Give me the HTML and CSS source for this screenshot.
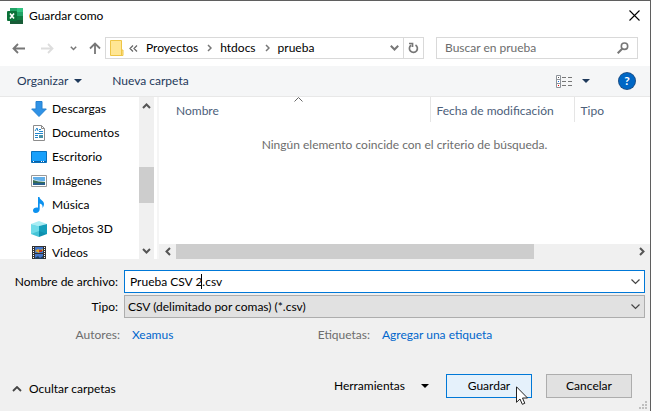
FILE: index.html
```html
<!DOCTYPE html>
<html lang="es">
<head>
  <meta charset="UTF-8">
  <meta name="viewport" content="width=device-width, initial-scale=1.0">
  <title>Guardar como</title>
  <link rel="stylesheet" href="styles.css">
</head>
<body>
  <div class="dialog">
    <header class="titlebar">
      <svg class="app-icon" width="16" height="16" viewBox="0 0 16 16">
        <path fill="#21a366" d="M3 0h7v4H3z"/>
        <path fill="#33c481" d="M10 0h6v4h-6z"/>
        <path fill="#107c41" d="M3 4h7v4H3zM10 8h6v4h-6z"/>
        <path fill="#21a366" d="M10 4h6v4h-6z"/>
        <path fill="#185c37" d="M3 8h7v4h6v4H3z"/>
        <rect y="3" width="10" height="10" rx="1" fill="#0b7239"/>
        <path d="M3 5.500l4 5M7 5.500l-4 5" stroke="#fff" stroke-width="1.600"/>
      </svg>
      <h1 class="title">Guardar como</h1>
      <button class="icon-btn close" aria-label="Cerrar">
        <svg width="11" height="11" viewBox="0 0 11 11"><path d="M.5.5l10 10M10.500.5l-10 10" fill="none" stroke="#000" stroke-width="1.100"/></svg>
      </button>
    </header>

    <nav class="navbar">
      <div class="nav-buttons">
        <button class="icon-btn" aria-label="Atrás">
          <svg width="13" height="11" viewBox="0 0 13 11"><path d="M13 5.500H1.500M6 1L1.500 5.500 6 10" fill="none" stroke="#777" stroke-width="1.800"/></svg>
        </button>
        <button class="icon-btn" aria-label="Adelante" disabled>
          <svg width="13" height="11" viewBox="0 0 13 11"><path d="M0 5.500h11.500M7 1l4.500 4.500L7 10" fill="none" stroke="#ddd" stroke-width="1.800"/></svg>
        </button>
        <button class="icon-btn" aria-label="Ubicaciones recientes">
          <svg width="7" height="5" viewBox="0 0 7 5"><path d="M.8.8l2.700 2.700L6.200.8" fill="none" stroke="#777" stroke-width="1.500"/></svg>
        </button>
        <button class="icon-btn" aria-label="Subir">
          <svg width="12" height="12" viewBox="0 0 12 12"><path d="M6 12V1.500M1 6.500l5-5 5 5" fill="none" stroke="#777" stroke-width="1.800"/></svg>
        </button>
      </div>
      <div class="address">
        <svg class="folder" width="14" height="16" viewBox="0 0 14 16">
          <path d="M.5.5h11v9.500h1.500v5.500H.5z" fill="#ffe694" stroke="#eec546"/>
          <path d="M11.500 10v5.500" stroke="#eec546"/>
        </svg>
        <svg class="crumb-sep" width="9" height="7" viewBox="0 0 9 7"><path d="M4 .5l-3 3 3 3M8 .5l-3 3 3 3" fill="none" stroke="#666" stroke-width="1.200"/></svg>
        <a class="crumb" href="#">Proyectos</a>
        <svg class="crumb-sep" width="5" height="8" viewBox="0 0 5 8"><path d="M1 1l3 3-3 3" fill="none" stroke="#777" stroke-width="1.500"/></svg>
        <a class="crumb" href="#">htdocs</a>
        <svg class="crumb-sep" width="5" height="8" viewBox="0 0 5 8"><path d="M1 1l3 3-3 3" fill="none" stroke="#777" stroke-width="1.500"/></svg>
        <a class="crumb" href="#">prueba</a>
        <button class="icon-btn address-drop" aria-label="Ubicaciones anteriores">
          <svg width="9" height="6" viewBox="0 0 9 6"><path d="M.8.8l3.700 3.700L8.200.8" fill="none" stroke="#777" stroke-width="2"/></svg>
        </button>
        <button class="icon-btn refresh" aria-label="Actualizar">
          <svg width="11" height="12" viewBox="0 0 11 12"><path d="M7.500 3a4 4 0 1 1-4.500.2M1 1.500h3.500V5" fill="none" stroke="#777" stroke-width="1.700"/></svg>
        </button>
      </div>
      <div class="search">
        <input type="text" placeholder="Buscar en prueba" aria-label="Buscar en prueba">
        <svg width="12" height="12" viewBox="0 0 12 12"><circle cx="7.500" cy="4.200" r="3.200" fill="none" stroke="#777" stroke-width="1.600"/><path d="M5.200 6.700L.7 11.200" stroke="#777" stroke-width="2"/></svg>
      </div>
    </nav>

    <div class="toolbar">
      <button class="tool">Organizar <span class="arrow"></span></button>
      <button class="tool">Nueva carpeta</button>
      <button class="tool view" aria-label="Cambiar vista">
        <svg width="17" height="13" viewBox="0 0 17 13">
          <path d="M.5.5h4v12h-4zM.5 4.500h4M.5 8.500h4" fill="#fff" stroke="#8d9299"/>
          <path d="M6 2.500h4M12 2.500h4M6 6.500h4M12 6.500h4M6 10.500h4M12 10.500h4" stroke="#777"/>
          <path d="M2 2h1v1H2z" fill="#555"/><path d="M2 6h1v1H2z" fill="#1672e8"/><path d="M2 10h1v1H2z" fill="#e00"/>
        </svg>
        <span class="arrow"></span>
      </button>
      <button class="help" aria-label="Ayuda">?</button>
    </div>

    <main class="explorer">
      <ul class="places">
        <li><a href="#">
          <svg width="16" height="16" viewBox="0 0 16 16"><path d="M5 .5h6v7.500h4.300L8 15.500.7 8H5z" fill="#2f92e6" stroke="#2581d0"/></svg>
          Descargas</a></li>
        <li><a href="#">
          <svg width="16" height="16" viewBox="0 0 16 16">
            <path d="M2.500.5h8l3 3v12h-11z" fill="#fff" stroke="#8c8c8c"/><path d="M10.500.5v3h3" fill="none" stroke="#8c8c8c"/>
            <path d="M4 6l2-3 1 3M8 4.500h2M8 6.500h4M4 8.500h8M4 10.500h3M4 12.500h3" fill="none" stroke="#2386cb"/><path d="M8 10h4v3H8z" fill="#4a91a6"/>
          </svg>
          Documentos</a></li>
        <li><a href="#">
          <svg width="16" height="16" viewBox="0 0 16 16"><path d="M.5 2.500h15v11H.5z" fill="#18a0fb" stroke="#0871bd"/><path d="M1 12.500h14" stroke="#0a5fa3"/><path d="M2 12.500h1M10 12.500h1M12 12.500h1" stroke="#fff"/></svg>
          Escritorio</a></li>
        <li><a href="#">
          <svg width="16" height="16" viewBox="0 0 16 16"><path d="M.5 2.500h15v11H.5z" fill="#fff" stroke="#999"/><path d="M2 4h12v8H2z" fill="#62afe9"/><path d="M2 6q4 2 12 2v1H2z" fill="#dceffa"/><path d="M2 7q5 2 12 2v1H2z" fill="#386d54"/><path d="M2 10h12v2H2z" fill="#285f8d"/></svg>
          Imágenes</a></li>
        <li><a href="#">
          <svg width="16" height="16" viewBox="0 0 16 16"><path d="M7 0h1.500c0 3 4.500 3.500 4.500 7 0 2-1 3.200-1.500 4 .5-3-1-4.200-2.800-4.500V12c0 2.500-2 4-4 4S2 14.800 2 13.300C2 11.500 4.500 10 7 10.700z" fill="#0c91ef"/></svg>
          Música</a></li>
        <li><a href="#">
          <svg width="16" height="16" viewBox="0 0 16 16"><path d="M0 3l8-3 8 3-8 2z" fill="#a8edf4"/><path d="M0 3l8 2v8l-8 0z" fill="#6fdbe8"/><path d="M16 3L8 5v8h8z" fill="#139ebb"/><path d="M0 13l8-3v6z" fill="#45c3d6"/><path d="M16 13l-8-3v6z" fill="#0f8fae"/></svg>
          Objetos 3D</a></li>
        <li><a href="#">
          <svg width="16" height="16" viewBox="0 0 16 16"><path d="M1 1h14v15H1z" fill="#333"/><path d="M4 2h8v6H4zM4 9h8v7H4z" fill="#4577ca"/><path d="M4 6l3-2 2 1 3-1v2H9l-1 2z" fill="#dea62e"/><path d="M8 5h3v2H8z" fill="#c4371d"/><path d="M4 13l3-2 2 2 3-2v5H4z" fill="#23405c"/><path d="M2.500 2v14M13.500 2v14" stroke="#fff" stroke-dasharray="1 1"/></svg>
          Videos</a></li>
      </ul>
      <div class="scroll-v">
        <svg width="9" height="6" viewBox="0 0 9 6"><path d="M1 5l3.500-3.500L8 5" fill="none" stroke="#555" stroke-width="2"/></svg>
        <div class="track-v"><div class="thumb-v"></div></div>
        <svg width="9" height="6" viewBox="0 0 9 6"><path d="M1 1l3.500 3.500L8 1" fill="none" stroke="#555" stroke-width="2"/></svg>
      </div>
      <section class="files">
        <table class="file-table">
          <thead>
            <tr>
              <th class="col-name">Nombre
                <svg class="sort" width="9" height="5" viewBox="0 0 9 5"><path d="M.5 4.500l4-4 4 4" fill="none" stroke="#666"/></svg>
              </th>
              <th class="col-date">Fecha de modificación</th>
              <th class="col-type">Tipo</th>
            </tr>
          </thead>
        </table>
        <p class="empty">Ningún elemento coincide con el criterio de búsqueda.</p>
        <div class="scroll-h">
          <svg width="6" height="9" viewBox="0 0 6 9"><path d="M5 1L1.500 4.500 5 8" fill="none" stroke="#555" stroke-width="2"/></svg>
          <div class="track-h"><div class="thumb-h"></div></div>
          <svg width="6" height="9" viewBox="0 0 6 9"><path d="M1 1l3.500 3.500L1 8" fill="none" stroke="#555" stroke-width="2"/></svg>
        </div>
      </section>
    </main>

    <form class="form">
      <div class="fields">
        <label for="filename">Nombre de archivo:</label>
        <div class="combo combo-active">
          <input id="filename" type="text" value="Prueba CSV 2.csv">
          <span class="caret"></span>
          <svg width="9" height="6" viewBox="0 0 9 6"><path d="M.5.5l4 4 4-4" fill="none" stroke="#444" stroke-width="1.200"/></svg>
        </div>
        <label for="filetype">Tipo:</label>
        <div class="combo">
          <select id="filetype"><option>CSV (delimitado por comas) (*.csv)</option></select>
          <svg width="9" height="6" viewBox="0 0 9 6"><path d="M.5.5l4 4 4-4" fill="none" stroke="#444" stroke-width="1.200"/></svg>
        </div>
      </div>
      <div class="meta">
        <span class="meta-label">Autores:</span>
        <a href="#">Xeamus</a>
        <span class="meta-label">Etiquetas:</span>
        <a href="#">Agregar una etiqueta</a>
      </div>
      <div class="actions">
        <button type="button" class="plain hide-folders">
          <svg width="10" height="6" viewBox="0 0 10 6"><path d="M1 5l4-4 4 4" fill="none" stroke="#444" stroke-width="1.800"/></svg>
          Ocultar carpetas
        </button>
        <button type="button" class="plain tools">Herramientas <span class="arrow"></span></button>
        <button type="button" class="btn btn-primary">Guardar
          <svg class="pointer" width="12" height="19" viewBox="0 0 12 19"><path d="M.5.8v15.500l3.500-3.300 2.300 5.300 2.500-1L6.500 12h5z" fill="#fff" stroke="#222"/></svg>
        </button>
        <button type="button" class="btn">Cancelar</button>
      </div>
      <svg class="grip" width="8" height="8" viewBox="0 0 8 8"><path d="M6 0h2v2H6zM3 3h2v2H3zM6 3h2v2H6zM0 6h2v2H0zM3 6h2v2H3zM6 6h2v2H6z" fill="#bfbfbf"/></svg>
    </form>
  </div>
</body>
</html>
```
FILE: styles.css
```css
* {
  box-sizing: border-box;
  margin: 0;
  padding: 0;
}

:root {
  --text: #000;
  --navy: #1e395b;
  --header: #4c607a;
  --muted: #6d6d6d;
  --link: #0066cc;
  --accent: #0078d7;
  --line: #d9d9d9;
  --face: #f0f0f0;
  --button: #e1e1e1;
  --thumb: #cdcdcd;
}

body,
button,
input,
select {
  font-family: Lato, "Segoe UI", sans-serif;
  font-size: 12px;
  line-height: 16px;
  color: var(--text);
}

button {
  background: none;
  border: none;
}

a {
  color: inherit;
  text-decoration: none;
}

svg {
  display: block;
  flex: none;
}

.dialog {
  display: flex;
  flex-direction: column;
  height: 100vh;
  background: #fff;
  border-top: 1px solid #5f5f5f;
  border-right: 1px solid #5f5f5f;
}

.icon-btn {
  display: flex;
  align-items: center;
  justify-content: center;
}

.arrow {
  border: 4px solid transparent;
  border-top-color: currentColor;
  border-bottom: none;
}

/* Title bar */
.titlebar {
  display: flex;
  align-items: center;
  height: 29px;
  padding: 0 10px 0 7px;
}

.title {
  flex: 1;
  margin-left: 6px;
  font-size: 12px;
  font-weight: 400;
}

/* Navigation */
.navbar {
  display: flex;
  padding: 7px 12px 7px;
}

.nav-buttons {
  display: flex;
  align-items: center;
  gap: 16px;
  width: 93px;
}

.nav-buttons .icon-btn:last-child {
  margin-left: -4px;
}

.address {
  display: flex;
  flex: 1;
  align-items: center;
  height: 22px;
  border: 1px solid var(--line);
  padding-left: 4px;
}

.folder {
  margin-right: 5px;
}

.crumb {
  margin: 0 9px 0 8px;
}

.address-drop {
  margin-left: auto;
  width: 18px;
}

.refresh {
  align-self: stretch;
  width: 20px;
  border-left: 1px solid var(--line);
}

.search {
  display: flex;
  flex: 0 0 202px;
  align-items: center;
  height: 22px;
  margin-left: 12px;
  padding: 0 8px;
  border: 1px solid var(--line);
}

.search input {
  flex: 1;
  min-width: 0;
  border: none;
  outline: none;
}

.search input::placeholder {
  color: var(--muted);
}

/* Toolbar */
.toolbar {
  display: flex;
  align-items: center;
  height: 31px;
  padding: 0 15px 0 17px;
  background: #f5f6f7;
  border-bottom: 1px solid #e8e8e8;
}

.tool {
  display: flex;
  align-items: center;
  gap: 6px;
  margin-right: 30px;
  color: var(--navy);
}

.view {
  gap: 9px;
  margin: 0 29px 0 auto;
}

.help {
  width: 16px;
  height: 16px;
  border-radius: 50%;
  background: #0067c5;
  box-shadow: 0 0 0 1px #1b4e86;
  color: #fff;
  font-weight: 700;
}

/* Explorer */
.explorer {
  display: flex;
  flex: 1;
  min-height: 0;
}

.places {
  width: 139px;
  padding-left: 31px;
  overflow: hidden;
  list-style: none;
}

.places a {
  display: flex;
  align-items: center;
  gap: 5px;
  height: 24px;
}

.scroll-v {
  display: flex;
  flex-direction: column;
  align-items: center;
  width: 15px;
  padding: 6px 0 5px;
  background: var(--face);
}

.track-v {
  display: grid;
  grid-template-rows: 58fr 36fr 45fr;
  flex: 1;
  width: 100%;
}

.thumb-v {
  grid-row: 2;
  background: var(--thumb);
}

.files {
  display: flex;
  flex: 1;
  flex-direction: column;
  min-width: 0;
  margin-left: 3px;
  border-left: 2px solid #f5f5f5;
}

.file-table {
  width: 100%;
  border-collapse: collapse;
  table-layout: fixed;
}

.file-table th {
  position: relative;
  height: 25px;
  padding: 2px 0 0 6px;
  border-right: 1px solid #e5e5e5;
  color: var(--header);
  font-weight: 400;
  text-align: left;
}

.file-table .col-name {
  width: 271px;
  padding-left: 17px;
}

.col-date {
  width: 144px;
}

.file-table .col-type {
  border-right: none;
}

.sort {
  position: absolute;
  top: 0;
  left: 50%;
}

.empty {
  margin-top: 15px;
  color: var(--muted);
  text-align: center;
}

.scroll-h {
  display: flex;
  align-items: center;
  height: 15px;
  margin-top: auto;
  padding: 0 5px 0 6px;
  background: var(--face);
}

.track-h {
  display: grid;
  grid-template-columns: 358fr 100fr;
  flex: 1;
  height: 100%;
  margin: 0 5px;
}

.thumb-h {
  background: var(--thumb);
}

/* Form */
.form {
  position: relative;
  padding: 11px 5px 13px 12px;
  background: var(--face);
}

.fields {
  display: grid;
  grid-template-columns: 106px 1fr;
  align-items: center;
  gap: 2px 6px;
}

.fields label {
  text-align: right;
  white-space: nowrap;
}

.combo {
  position: relative;
  display: flex;
  align-items: center;
  height: 23px;
  background: var(--button);
  border: 1px solid #adadad;
}

.combo-active {
  background: #fff;
  border-color: var(--accent);
}

.combo input,
.combo select {
  width: 100%;
  height: 100%;
  padding: 0 24px 0 3px;
  border: none;
  outline: none;
  background: none;
  appearance: none;
}

.combo input {
  padding-left: 5px;
}

.combo svg {
  position: absolute;
  right: 4px;
  pointer-events: none;
}

.caret {
  position: absolute;
  left: 76px;
  width: 1px;
  height: 15px;
  background: #000;
}

.meta {
  display: grid;
  grid-template-columns: 108px 1fr 80px 263px;
  gap: 12px;
  margin-top: 9px;
  color: var(--link);
}

.meta-label {
  color: var(--muted);
  text-align: right;
}

.actions {
  display: flex;
  align-items: center;
  gap: 14px;
  margin-top: 31px;
  padding-right: 13px;
}

.plain {
  display: flex;
  align-items: center;
}

.hide-folders {
  gap: 7px;
  margin-right: auto;
  padding-top: 6px;
}

.tools {
  gap: 16px;
  margin-right: 3px;
}

.btn {
  position: relative;
  width: 86px;
  height: 24px;
  background: var(--button);
  border: 1px solid #adadad;
}

.btn-primary {
  background: #e5f1fb;
  border-color: var(--accent);
}

.pointer {
  position: absolute;
  top: 11px;
  right: 3px;
}

.grip {
  position: absolute;
  right: 3px;
  bottom: 2px;
}
```
